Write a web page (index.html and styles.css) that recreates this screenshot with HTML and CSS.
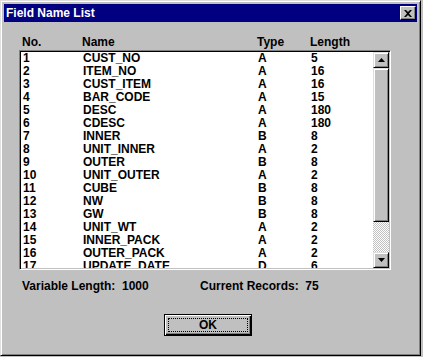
FILE: index.html
```html
<!DOCTYPE html>
<html lang="en">
<head>
    <meta charset="UTF-8">
    <title>Field Name List</title>
    <link rel="stylesheet" href="styles.css">
</head>
<body>
<div class="window">
    <div class="titlebar">
        <span class="title">Field Name List</span>
        <span class="closeBtn">
            <svg width="8" height="7" viewBox="0 0 8 7"><path d="M0 0h2l2 2 2-2h2L5 3.5 8 7H6L4 5 2 7H0l3-3.5z" fill="#000"/></svg>
        </span>
    </div>

    <div class="content">
        <div class="cols head">
            <span>No.</span><span>Name</span><span>Type</span><span>Length</span>
        </div>

        <div class="listBox">
            <div class="rows">
                <div class="cols"><span>1</span><span>CUST_NO</span><span>A</span><span>5</span></div>
                <div class="cols"><span>2</span><span>ITEM_NO</span><span>A</span><span>16</span></div>
                <div class="cols"><span>3</span><span>CUST_ITEM</span><span>A</span><span>16</span></div>
                <div class="cols"><span>4</span><span>BAR_CODE</span><span>A</span><span>15</span></div>
                <div class="cols"><span>5</span><span>DESC</span><span>A</span><span>180</span></div>
                <div class="cols"><span>6</span><span>CDESC</span><span>A</span><span>180</span></div>
                <div class="cols"><span>7</span><span>INNER</span><span>B</span><span>8</span></div>
                <div class="cols"><span>8</span><span>UNIT_INNER</span><span>A</span><span>2</span></div>
                <div class="cols"><span>9</span><span>OUTER</span><span>B</span><span>8</span></div>
                <div class="cols"><span>10</span><span>UNIT_OUTER</span><span>A</span><span>2</span></div>
                <div class="cols"><span>11</span><span>CUBE</span><span>B</span><span>8</span></div>
                <div class="cols"><span>12</span><span>NW</span><span>B</span><span>8</span></div>
                <div class="cols"><span>13</span><span>GW</span><span>B</span><span>8</span></div>
                <div class="cols"><span>14</span><span>UNIT_WT</span><span>A</span><span>2</span></div>
                <div class="cols"><span>15</span><span>INNER_PACK</span><span>A</span><span>2</span></div>
                <div class="cols"><span>16</span><span>OUTER_PACK</span><span>A</span><span>2</span></div>
                <div class="cols"><span>17</span><span>UPDATE_DATE</span><span>D</span><span>6</span></div>
            </div>
            <div class="scrollBar">
                <div class="sbBtn">
                    <svg width="7" height="4" viewBox="0 0 7 4"><path d="M3.5 0L7 4H0z" fill="#000"/></svg>
                </div>
                <div class="thumb"></div>
                <div class="track"></div>
                <div class="sbBtn">
                    <svg width="7" height="4" viewBox="0 0 7 4"><path d="M0 0h7L3.5 4z" fill="#000"/></svg>
                </div>
            </div>
        </div>

        <div class="info">
            <span class="varLen">Variable Length:  1000</span>
            <span>Current Records:  75</span>
        </div>

        <div class="btnRow">
            <button class="okBtn"><span class="focus">OK</span></button>
        </div>
    </div>
</div>
</body>
</html>
```

FILE: styles.css
```css
body{
    margin: 0;
    background-color: #c0c0c0;
    font-family: "Liberation Sans", Arial, sans-serif;
    font-weight: bold;
    font-size: 12px;
    color: #000;
}
.window{
    width: 421px;
    height: 356px;
    box-sizing: border-box;
    padding: 3px;
    background-color: #c0c0c0;
    border: 1px solid;
    border-color: #dfdfdf #000 #000 #dfdfdf;
    box-shadow: inset 1px 1px #fff, inset -1px -1px #808080;
}
.titlebar{
    height: 18px;
    background-color: #000080;
    color: #fff;
    display: flex;
    align-items: center;
    justify-content: space-between;
    padding-left: 2px;
}
.closeBtn{
    width: 16px;
    height: 14px;
    box-sizing: border-box;
    margin-right: 1px;
    background-color: #c0c0c0;
    border: 1px solid;
    border-color: #fff #000 #000 #fff;
    box-shadow: inset -1px -1px #808080;
    display: flex;
    align-items: center;
    justify-content: center;
}
.content{
    padding: 14px 0 0 15px;
}
.cols{
    display: grid;
    grid-template-columns: 60px 175px 53px auto;
    height: 13px;
    line-height: 13px;
    white-space: nowrap;
}
.head{
    padding-left: 3px;
    margin-bottom: 1px;
}
.listBox{
    width: 372px;
    height: 220px;
    box-sizing: border-box;
    border: 1px solid;
    border-color: #808080 #fff #fff #808080;
    box-shadow: inset 1px 1px #000, inset -1px -1px #c0c0c0;
    background-color: #fff;
    padding: 1px 1px 1px 2px;
    display: flex;
}
.rows{
    flex: 1;
    overflow: hidden;
    padding-left: 1px;
}
.scrollBar{
    width: 16px;
    display: flex;
    flex-direction: column;
}
.sbBtn, .thumb{
    box-sizing: border-box;
    background-color: #c0c0c0;
    border: 1px solid;
    border-color: #dfdfdf #000 #000 #dfdfdf;
    box-shadow: inset 1px 1px #fff, inset -1px -1px #808080;
}
.sbBtn{
    height: 16px;
    display: flex;
    align-items: center;
    justify-content: center;
}
.thumb{
    height: 154px;
}
.track{
    flex: 1;
    background: repeating-conic-gradient(#c0c0c0 0 25%, #fff 0 50%) 0 0/2px 2px;
}
.info{
    display: flex;
    padding: 10px 0 0 3px;
    height: 13px;
    line-height: 13px;
    white-space: pre;
}
.varLen{
    width: 178px;
}
.btnRow{
    padding: 21px 0 0 145px;
}
.okBtn{
    width: 88px;
    height: 22px;
    padding: 3px;
    font: inherit;
    color: #000;
    background-color: #c0c0c0;
    border: 1px solid #000;
    box-shadow: inset 1px 1px #fff, inset -1px -1px #000, inset -2px -2px #808080;
    display: flex;
}
.focus{
    flex: 1;
    border: 1px dotted #000;
    display: flex;
    align-items: center;
    justify-content: center;
    line-height: 12px;
}
```
